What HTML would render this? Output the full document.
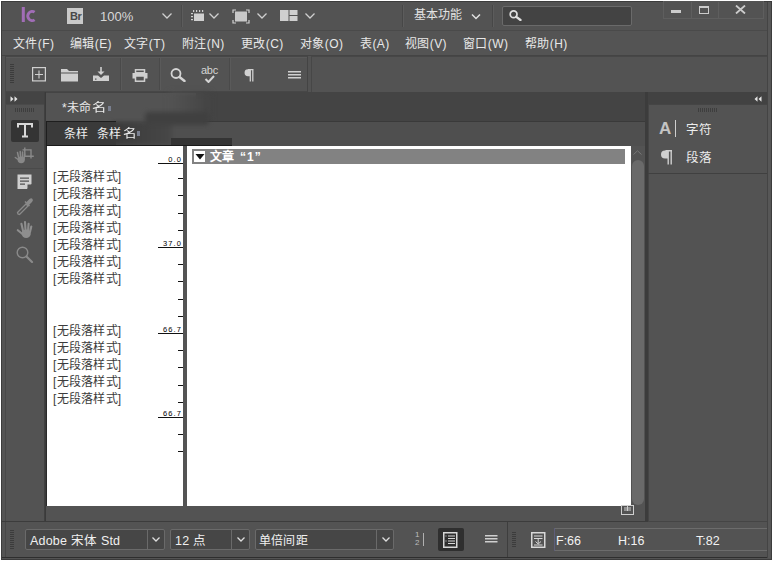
<!DOCTYPE html>
<html lang="zh-CN">
<head>
<meta charset="utf-8">
<style>
*{box-sizing:border-box;margin:0;padding:0}
html,body{width:772px;height:561px;overflow:hidden;background:#fff}
body{position:relative;font-family:"Liberation Sans",sans-serif;color:#e6e6e6}
.a{position:absolute}
#app{left:1px;top:1px;width:771px;height:559px;background:#535353;border:1px solid #3c3c3c;overflow:hidden}
.t{position:absolute;white-space:nowrap;font-size:12px;line-height:14px}
.vl{position:absolute;width:1px}
.hl{position:absolute;height:1px}
</style>
</head>
<body>
<div id="app" class="a"></div>

<!-- ===== TITLE BAR ===== -->
<div class="a" style="left:2px;top:2px;width:769px;height:28px;background:#535353"></div>
<div class="hl" style="left:2px;top:30px;width:769px;background:#4a4a4a"></div>
<!-- Ic logo -->
<svg class="a" style="left:18px;top:4px" width="22" height="22" viewBox="0 0 22 22"><g opacity="0.92"><rect x="3.8" y="3" width="3" height="15" fill="#a870c0"/><path d="M16.6 8.2 A4.3 4.6 0 1 0 16.6 15.8" fill="none" stroke="#a870c0" stroke-width="2.8"/></g></svg>
<!-- Br -->
<div class="a" style="left:67px;top:8px;width:16px;height:16px;background:#c9c9c9"></div>
<div class="t" style="left:70px;top:9px;font-size:11px;line-height:14px;font-weight:bold;color:#484848;letter-spacing:-0.5px">Br</div>
<div class="t" style="left:100px;top:10px;font-size:13px;line-height:14px;color:#d8d8d8">100%</div>

<!-- chevrons & icons in title -->
<svg class="a" style="left:160px;top:12px" width="14" height="8" viewBox="0 0 14 8"><path d="M2.5 1.5 L7 6 L11.5 1.5" fill="none" stroke="#cfcfcf" stroke-width="1.3"/></svg>
<div class="vl" style="left:181px;top:5px;height:22px;background:#4a4a4a"></div>
<div class="vl" style="left:182px;top:5px;height:22px;background:#5c5c5c"></div>
<!-- view options icon -->
<svg class="a" style="left:190px;top:10px" width="16" height="12" viewBox="0 0 16 12">
<g fill="#cfcfcf"><rect x="3" y="0" width="1.2" height="2"/><rect x="6" y="0" width="1.2" height="2"/><rect x="9" y="0" width="1.2" height="2"/><rect x="12" y="0" width="1.2" height="2"/>
<rect x="1" y="3" width="2" height="1.2"/><rect x="1" y="6" width="2" height="1.2"/><rect x="1" y="9" width="2" height="1.2"/>
<rect x="4" y="3.5" width="10" height="7.5"/></g></svg>
<svg class="a" style="left:207px;top:12px" width="14" height="8" viewBox="0 0 14 8"><path d="M2.5 1.5 L7 6 L11.5 1.5" fill="none" stroke="#cfcfcf" stroke-width="1.3"/></svg>
<!-- screen mode icon -->
<svg class="a" style="left:232px;top:9px" width="18" height="15" viewBox="0 0 18 15">
<g fill="none" stroke="#d0d0d0" stroke-width="1.2"><path d="M1 4V1H4"/><path d="M14 1H17V4"/><path d="M17 11V14H14"/><path d="M4 14H1V11"/></g>
<rect x="3" y="2.5" width="12" height="10" fill="#c8c8c8"/></svg>
<svg class="a" style="left:255px;top:12px" width="14" height="8" viewBox="0 0 14 8"><path d="M2.5 1.5 L7 6 L11.5 1.5" fill="none" stroke="#cfcfcf" stroke-width="1.3"/></svg>
<!-- arrange icon -->
<svg class="a" style="left:280px;top:10px" width="18" height="12" viewBox="0 0 18 12">
<g fill="#cfcfcf"><rect x="0" y="0" width="8.5" height="11"/><rect x="9.5" y="0" width="8" height="5"/><rect x="9.5" y="6" width="8" height="5"/></g></svg>
<svg class="a" style="left:303px;top:12px" width="14" height="8" viewBox="0 0 14 8"><path d="M2.5 1.5 L7 6 L11.5 1.5" fill="none" stroke="#cfcfcf" stroke-width="1.3"/></svg>

<div class="vl" style="left:402px;top:5px;height:22px;background:#474747"></div>
<div class="vl" style="left:403px;top:5px;height:22px;background:#5c5c5c"></div>
<div class="t" style="left:414px;top:8px;font-size:12px;line-height:14px;color:#e2e2e2">基本功能</div>
<svg class="a" style="left:469px;top:13px" width="14" height="8" viewBox="0 0 14 8"><path d="M3 1.5 L7 5.5 L11 1.5" fill="none" stroke="#e0e0e0" stroke-width="1.5"/></svg>
<div class="vl" style="left:492px;top:5px;height:22px;background:#474747"></div>
<div class="vl" style="left:493px;top:5px;height:22px;background:#5c5c5c"></div>
<!-- search box -->
<div class="a" style="left:502px;top:6px;width:130px;height:20px;background:#434343;border:1px solid #6a6a6a;border-radius:2px"></div>
<svg class="a" style="left:509px;top:10px" width="13" height="11" viewBox="0 0 13 11"><circle cx="4.6" cy="4.3" r="3.4" fill="none" stroke="#e0e0e0" stroke-width="1.7"/><path d="M7.3 6.8 L11.5 10" stroke="#e0e0e0" stroke-width="2.3" stroke-linecap="round"/></svg>
<!-- window controls -->
<div class="a" style="left:663px;top:1px;width:101px;height:18px;border:1px solid #5e5e5e;border-top:none;background:#535353"></div>
<div class="vl" style="left:691px;top:2px;height:16px;background:#5e5e5e"></div>
<div class="vl" style="left:718px;top:2px;height:16px;background:#5e5e5e"></div>
<div class="a" style="left:671px;top:10px;width:10px;height:3px;background:#cccccc"></div>
<div class="a" style="left:699px;top:6px;width:10px;height:8px;border:2px solid #cccccc;border-width:2px 1.5px 1.5px 1.5px"></div>
<svg class="a" style="left:735px;top:5px" width="11" height="9" viewBox="0 0 11 9"><path d="M1 0.5 L10 8.5 M10 0.5 L1 8.5" stroke="#cccccc" stroke-width="1.8"/></svg>

<!-- ===== MENU BAR ===== -->
<div class="a" style="left:2px;top:31px;width:769px;height:24px;background:#545454"></div>
<div class="hl" style="left:2px;top:55px;width:769px;background:#444"></div>
<div class="t" style="left:13px;top:37px;color:#e8e8e8;letter-spacing:0.4px">文件(F)</div>
<div class="t" style="left:70px;top:37px;color:#e8e8e8;letter-spacing:0.4px">编辑(E)</div>
<div class="t" style="left:124px;top:37px;color:#e8e8e8;letter-spacing:0.4px">文字(T)</div>
<div class="t" style="left:182px;top:37px;color:#e8e8e8;letter-spacing:0.4px">附注(N)</div>
<div class="t" style="left:241px;top:37px;color:#e8e8e8;letter-spacing:0.4px">更改(C)</div>
<div class="t" style="left:300px;top:37px;color:#e8e8e8;letter-spacing:0.4px">对象(O)</div>
<div class="t" style="left:360px;top:37px;color:#e8e8e8;letter-spacing:0.4px">表(A)</div>
<div class="t" style="left:405px;top:37px;color:#e8e8e8;letter-spacing:0.4px">视图(V)</div>
<div class="t" style="left:463px;top:37px;color:#e8e8e8;letter-spacing:0.4px">窗口(W)</div>
<div class="t" style="left:525px;top:37px;color:#e8e8e8;letter-spacing:0.4px">帮助(H)</div>

<!-- ===== CONTROL TOOLBAR ===== -->
<div class="a" style="left:5px;top:56px;width:303px;height:36px;border:1px solid #474747;border-right-color:#444;background:#535353"></div>
<div class="hl" style="left:6px;top:57px;width:301px;background:#5a5a5a"></div>
<div class="vl" style="left:311px;top:56px;height:36px;background:#474747"></div>
<div class="hl" style="left:311px;top:56px;width:460px;background:#474747"></div>
<!-- grip -->
<svg class="a" style="left:10px;top:64px" width="4" height="20" viewBox="0 0 4 20"><g fill="#3c3c3c">
<rect x="0" y="0" width="4" height="1"/><rect x="0" y="2" width="4" height="1"/><rect x="0" y="4" width="4" height="1"/><rect x="0" y="6" width="4" height="1"/><rect x="0" y="8" width="4" height="1"/><rect x="0" y="10" width="4" height="1"/><rect x="0" y="12" width="4" height="1"/><rect x="0" y="14" width="4" height="1"/><rect x="0" y="16" width="4" height="1"/><rect x="0" y="18" width="4" height="1"/></g></svg>
<!-- new doc -->
<svg class="a" style="left:32px;top:67px" width="14" height="15" viewBox="0 0 14 15"><rect x="0.6" y="0.6" width="12.8" height="13.3" fill="none" stroke="#d0d0d0" stroke-width="1.2"/><path d="M7 3.5V11.5M3 7.5H11" stroke="#d0d0d0" stroke-width="1.1"/></svg>
<!-- folder -->
<svg class="a" style="left:61px;top:69px" width="18" height="13" viewBox="0 0 18 13"><path d="M0 0H6L8 2H17V3.5H0Z" fill="#cfcfcf"/><rect x="0" y="4.5" width="17" height="8" fill="#cfcfcf"/></svg>
<!-- download -->
<svg class="a" style="left:92px;top:67px" width="18" height="15" viewBox="0 0 18 15"><path d="M9 0V6" stroke="#d0d0d0" stroke-width="1.6"/><path d="M5.5 4.5L9 8L12.5 4.5Z" fill="#d0d0d0"/><path d="M1 8.5H6L9 11L12 8.5H17V14H1Z" fill="#cfcfcf"/><rect x="3" y="11.5" width="1.5" height="1.2" fill="#535353"/></svg>
<div class="vl" style="left:120px;top:58px;height:32px;background:#4a4a4a"></div>
<div class="vl" style="left:121px;top:58px;height:32px;background:#5a5a5a"></div>
<!-- printer -->
<svg class="a" style="left:132px;top:69px" width="16" height="13" viewBox="0 0 16 13"><rect x="3.5" y="0.8" width="9" height="3" fill="none" stroke="#d0d0d0" stroke-width="1.5"/><rect x="0.5" y="4" width="15" height="5.5" fill="#d0d0d0"/><rect x="3.5" y="7" width="9" height="5.2" fill="#535353" stroke="#d0d0d0" stroke-width="1.5"/></svg>
<div class="vl" style="left:159px;top:58px;height:32px;background:#4a4a4a"></div>
<div class="vl" style="left:160px;top:58px;height:32px;background:#5a5a5a"></div>
<!-- magnifier -->
<svg class="a" style="left:170px;top:68px" width="17" height="14" viewBox="0 0 17 14"><circle cx="6" cy="5.5" r="4.5" fill="none" stroke="#d4d4d4" stroke-width="1.8"/><path d="M9.5 9 L14.5 13" stroke="#d4d4d4" stroke-width="2.4" stroke-linecap="round"/></svg>
<!-- abc check -->
<div class="t" style="left:201px;top:64px;font-size:11px;line-height:12px;color:#d4d4d4;letter-spacing:-0.3px">abc</div>
<svg class="a" style="left:204px;top:75px" width="12" height="8" viewBox="0 0 12 8"><path d="M1.5 4 L4.5 7 L10 1" fill="none" stroke="#d4d4d4" stroke-width="2"/></svg>
<div class="vl" style="left:229px;top:58px;height:32px;background:#4a4a4a"></div>
<div class="vl" style="left:230px;top:58px;height:32px;background:#5a5a5a"></div>
<!-- pilcrow -->
<svg class="a" style="left:244px;top:69px" width="10" height="13" viewBox="0 0 10 13"><path d="M4 0.7H9.5M6.3 0.7V12.5M8.8 0.7V12.5" fill="none" stroke="#d0d0d0" stroke-width="1.3"/><path d="M6.2 0.3H4A3.4 3.4 0 0 0 4 7.2H6.2Z" fill="#d0d0d0"/></svg>
<!-- hamburger -->
<svg class="a" style="left:288px;top:71px" width="13" height="8" viewBox="0 0 13 8"><path d="M0 0.75H13M0 3.75H13M0 6.75H13" stroke="#d0d0d0" stroke-width="1.3"/></svg>

<!-- ===== LEFT TOOL PANEL ===== -->
<div class="vl" style="left:5px;top:92px;height:429px;background:#484848"></div>
<div class="a" style="left:6px;top:92px;width:38px;height:12px;background:#444"></div>
<div class="hl" style="left:5px;top:104px;width:40px;background:#4a4a4a"></div>
<svg class="a" style="left:10px;top:96px" width="8" height="6" viewBox="0 0 8 6"><path d="M0.5 0.3L3.5 3L0.5 5.7Z M4.5 0.3L7.5 3L4.5 5.7Z" fill="#e4e4e4"/></svg>
<svg class="a" style="left:15px;top:108px" width="20" height="4" viewBox="0 0 20 4"><g fill="#3e3e3e"><rect x="0" y="0" width="1" height="4"/><rect x="2" y="0" width="1" height="4"/><rect x="4" y="0" width="1" height="4"/><rect x="6" y="0" width="1" height="4"/><rect x="8" y="0" width="1" height="4"/><rect x="10" y="0" width="1" height="4"/><rect x="12" y="0" width="1" height="4"/><rect x="14" y="0" width="1" height="4"/><rect x="16" y="0" width="1" height="4"/><rect x="18" y="0" width="1" height="4"/></g></svg>
<div class="vl" style="left:44px;top:92px;height:429px;background:#404040"></div>
<div class="vl" style="left:45px;top:92px;height:429px;background:#3a3a3a"></div>
<!-- T tool selected -->
<div class="a" style="left:11px;top:120px;width:28px;height:22px;background:#343434;border-radius:2px"></div>
<svg class="a" style="left:17px;top:123px" width="16" height="15" viewBox="0 0 16 15"><path d="M1 4.5V1H15V4.5M8 1V13.5M5 13.5H11" fill="none" stroke="#d8d8d8" stroke-width="2"/></svg>
<!-- position tool -->
<svg class="a" style="left:10px;top:142px" width="30" height="26" viewBox="0 0 30 26">
<g fill="none" stroke="#8a8a8a" stroke-width="1.4"><path d="M14.8 5.4V14.2H23.8M12.5 7.9H21V16.4"/></g>
<g stroke="#888" stroke-width="1.5" stroke-linecap="round" fill="none"><path d="M5.3 15.5L8.8 18M7.5 10.5L8.8 16.5M10.2 9.5L10.6 16.5M12.6 10L12.4 16.5M14.6 12L14 17.5"/></g>
<ellipse cx="11.2" cy="17.8" rx="3.6" ry="3.4" fill="#888"/></svg>
<div class="hl" style="left:8px;top:168px;width:35px;background:#4a4a4a"></div>
<!-- note tool -->
<svg class="a" style="left:17px;top:174px" width="16" height="16" viewBox="0 0 16 16"><path d="M0.5 0.5H14.5V10L10 15H0.5Z" fill="#cfcfcf"/><path d="M3 4.2H12M3 7.2H12M3 10.2H8" stroke="#535353" stroke-width="1.3"/><path d="M10.5 15V10.5H15" fill="#535353"/></svg>
<!-- eyedropper -->
<svg class="a" style="left:16px;top:197px" width="18" height="19" viewBox="0 0 18 19"><path d="M2 17 L1.5 15.5 L10 7 L12 9 L3.5 17.5Z" fill="none" stroke="#8a8a8a" stroke-width="1.3"/><path d="M10 5.5 L13.5 2 Q15.5 0.5 16.5 2 Q17.5 3.5 16 5 L12.5 8.5Z" fill="#8a8a8a"/><path d="M9 4.5 L13.5 9" stroke="#8a8a8a" stroke-width="1.5"/></svg>
<!-- hand -->
<svg class="a" style="left:12px;top:218px" width="26" height="24" viewBox="0 0 26 24">
<g stroke="#8e8e8e" stroke-width="2.1" stroke-linecap="round" fill="none"><path d="M5.8 12.2L10.5 16M9.4 5.8L11.2 13.5M13 4L13.6 13M16.6 5.8L16 13M19.3 8.6L18 14"/></g>
<ellipse cx="14.2" cy="15.8" rx="4.6" ry="4.2" fill="#8e8e8e"/></svg>
<!-- zoom -->
<svg class="a" style="left:16px;top:246px" width="18" height="17" viewBox="0 0 18 17"><circle cx="6.5" cy="6.5" r="5.3" fill="none" stroke="#8a8a8a" stroke-width="1.4"/><path d="M10.5 10.5 L16 16" stroke="#8a8a8a" stroke-width="2.2" stroke-linecap="round"/></svg>

<!-- ===== DOC TAB BAR ===== -->
<div class="a" style="left:46px;top:92px;width:599px;height:29px;background:#444"></div>
<div class="a" style="left:46px;top:93px;width:150px;height:28px;background:#535353"></div>
<div class="a" style="left:170px;top:93px;width:40px;height:28px;background:linear-gradient(90deg,#535353,#444);filter:blur(3px)"></div>

<div class="t" style="left:62px;top:101px;color:#eaeaea;letter-spacing:0.4px">*未命</div><div class="t" style="left:92px;top:101px;color:#eaeaea;transform:scaleX(1.2);transform-origin:left">名</div><div class="a" style="left:108px;top:106px;width:3px;height:5px;background:#7a8090;filter:blur(0.5px)"></div>

<!-- ===== SUB BAR ===== -->
<div class="a" style="left:46px;top:121px;width:599px;height:25px;background:#4f4f4f"></div>
<div class="hl" style="left:176px;top:121px;width:469px;background:#3a3a3a"></div>
<div class="a" style="left:112px;top:122px;width:60px;height:23px;background:linear-gradient(90deg,#3a3a3a,#474747);filter:blur(2px)"></div>
<div class="a" style="left:46px;top:121px;width:70px;height:25px;background:#3a3a3a;border:1px solid #1e1e1e;border-bottom:none;border-right:none"></div>

<div class="a" style="left:171px;top:138px;width:61px;height:7px;background:#343434"></div>
<div class="hl" style="left:46px;top:145px;width:186px;background:#1a1a1a"></div>
<div class="a" style="left:145px;top:112px;width:64px;height:13px;background:#404040;filter:blur(2px);border-radius:4px"></div>
<div class="t" style="left:64px;top:127px;color:#eeeeee">条样</div>
<div class="t" style="left:97px;top:127px;color:#eeeeee">条样</div><div class="t" style="left:123px;top:127px;color:#eeeeee;transform:scaleX(1.15);transform-origin:left">名</div><div class="a" style="left:137px;top:131px;width:3px;height:5px;background:#7a8090;filter:blur(0.5px)"></div>

<!-- ===== DOCUMENT WHITE AREAS ===== -->
<div class="a" style="left:46px;top:146px;width:1px;height:360px;background:#2a2a2a"></div>
<div class="a" style="left:47px;top:146px;width:136px;height:360px;background:#fff"></div>
<div class="a" style="left:183px;top:146px;width:4px;height:360px;background:#545454"></div>
<div class="a" style="left:187px;top:146px;width:444px;height:360px;background:#fff"></div>
<!-- story bar -->
<div class="a" style="left:192px;top:149px;width:433px;height:15px;background:#828282"></div>
<div class="a" style="left:194px;top:151px;width:11px;height:11px;background:#fff"></div>
<svg class="a" style="left:195px;top:154px" width="10" height="6" viewBox="0 0 10 6"><path d="M0.5 0H9.5L5 5.5Z" fill="#111"/></svg>
<div class="t" style="left:210px;top:150px;color:#fff;font-weight:bold">文章<span style="margin-left:6px;letter-spacing:1px">“1”</span></div>
<!-- scrollbar -->
<div class="a" style="left:631px;top:146px;width:14px;height:360px;background:#535353"></div>
<svg class="a" style="left:633px;top:150px" width="9" height="5" viewBox="0 0 9 5"><path d="M0.5 4.5L4.5 0.8L8.5 4.5" fill="none" stroke="#777" stroke-width="1"/></svg>
<div class="a" style="left:632px;top:160px;width:12px;height:345px;background:#6a6a6a;border-radius:6px"></div>
<!-- bottom h scroll area -->
<div class="a" style="left:46px;top:506px;width:599px;height:15px;background:#535353"></div>
<svg class="a" style="left:621px;top:505px" width="13" height="10" viewBox="0 0 13 10"><rect x="0.5" y="0.5" width="12" height="9" fill="none" stroke="#cfcfcf" stroke-width="1"/><path d="M3 3H10M3 5H10M6.5 1V6" stroke="#cfcfcf" stroke-width="1"/></svg>
<div class="hl" style="left:2px;top:521px;width:769px;background:#3c3c3c"></div>

<!-- ===== RIGHT PANEL DOCK ===== -->
<div class="a" style="left:645px;top:92px;width:3px;height:429px;background:#3c3c3c"></div>
<div class="a" style="left:648px;top:92px;width:119px;height:12px;background:#424242"></div>
<svg class="a" style="left:754px;top:96px" width="8" height="6" viewBox="0 0 8 6"><path d="M3.5 0.3L0.5 3L3.5 5.7Z M7.5 0.3L4.5 3L7.5 5.7Z" fill="#e4e4e4"/></svg>
<div class="a" style="left:648px;top:104px;width:120px;height:418px;background:#535353;border:1px solid #454545"></div>
<svg class="a" style="left:698px;top:108px" width="20" height="4" viewBox="0 0 20 4"><g fill="#3e3e3e"><rect x="0" y="0" width="1" height="4"/><rect x="2" y="0" width="1" height="4"/><rect x="4" y="0" width="1" height="4"/><rect x="6" y="0" width="1" height="4"/><rect x="8" y="0" width="1" height="4"/><rect x="10" y="0" width="1" height="4"/><rect x="12" y="0" width="1" height="4"/><rect x="14" y="0" width="1" height="4"/><rect x="16" y="0" width="1" height="4"/><rect x="18" y="0" width="1" height="4"/></g></svg>
<div class="hl" style="left:648px;top:173px;width:120px;background:#404040"></div>
<div class="t" style="left:659px;top:120px;font-size:17px;line-height:17px;font-weight:bold;color:#c4c4c4">A</div>
<div class="vl" style="left:675px;top:120px;height:17px;background:#cfcfcf"></div>
<div class="t" style="left:686px;top:123px;font-size:12.5px;color:#ececec">字符</div>
<svg class="a" style="left:660px;top:150px" width="13" height="15" viewBox="0 0 13 15"><path d="M5.5 0.8H12M8.2 0.8V14.5M11.2 0.8V14.5" fill="none" stroke="#cfcfcf" stroke-width="1.4"/><path d="M8 0.5H5A4 4 0 0 0 5 8.5H8Z" fill="#cfcfcf"/></svg>
<div class="t" style="left:686px;top:151px;font-size:12.5px;color:#ececec">段落</div>

<!-- ===== GALLEY INFO COLUMN ===== -->
<div class="t" style="left:53px;top:170px;color:#3c3c3c;letter-spacing:0.25px">[无段落样式]</div>
<div class="t" style="left:53px;top:187px;color:#3c3c3c;letter-spacing:0.25px">[无段落样式]</div>
<div class="t" style="left:53px;top:204px;color:#3c3c3c;letter-spacing:0.25px">[无段落样式]</div>
<div class="t" style="left:53px;top:221px;color:#3c3c3c;letter-spacing:0.25px">[无段落样式]</div>
<div class="t" style="left:53px;top:238px;color:#3c3c3c;letter-spacing:0.25px">[无段落样式]</div>
<div class="t" style="left:53px;top:255px;color:#3c3c3c;letter-spacing:0.25px">[无段落样式]</div>
<div class="t" style="left:53px;top:272px;color:#3c3c3c;letter-spacing:0.25px">[无段落样式]</div>
<div class="t" style="left:53px;top:324px;color:#3c3c3c;letter-spacing:0.25px">[无段落样式]</div>
<div class="t" style="left:53px;top:341px;color:#3c3c3c;letter-spacing:0.25px">[无段落样式]</div>
<div class="t" style="left:53px;top:358px;color:#3c3c3c;letter-spacing:0.25px">[无段落样式]</div>
<div class="t" style="left:53px;top:375px;color:#3c3c3c;letter-spacing:0.25px">[无段落样式]</div>
<div class="t" style="left:53px;top:392px;color:#3c3c3c;letter-spacing:0.25px">[无段落样式]</div>
<div class="hl" style="left:178px;top:178px;width:5px;background:#111"></div>
<div class="hl" style="left:178px;top:195px;width:5px;background:#111"></div>
<div class="hl" style="left:178px;top:213px;width:5px;background:#111"></div>
<div class="hl" style="left:178px;top:230px;width:5px;background:#111"></div>
<div class="hl" style="left:178px;top:264px;width:5px;background:#111"></div>
<div class="hl" style="left:178px;top:281px;width:5px;background:#111"></div>
<div class="hl" style="left:178px;top:299px;width:5px;background:#111"></div>
<div class="hl" style="left:178px;top:316px;width:5px;background:#111"></div>
<div class="hl" style="left:178px;top:350px;width:5px;background:#111"></div>
<div class="hl" style="left:178px;top:367px;width:5px;background:#111"></div>
<div class="hl" style="left:178px;top:385px;width:5px;background:#111"></div>
<div class="hl" style="left:178px;top:402px;width:5px;background:#111"></div>
<div class="hl" style="left:178px;top:434px;width:5px;background:#111"></div>
<div class="hl" style="left:178px;top:451px;width:5px;background:#111"></div>
<div class="hl" style="left:158px;top:163px;width:25px;background:#111"></div>
<div class="t" style="right:590px;top:156px;font-size:7.5px;line-height:7px;color:#000;letter-spacing:1.1px">0.0</div>
<div class="hl" style="left:158px;top:247px;width:25px;background:#111"></div>
<div class="t" style="right:590px;top:240px;font-size:7.5px;line-height:7px;color:#000;letter-spacing:1.1px">37.0</div>
<div class="hl" style="left:158px;top:333px;width:25px;background:#111"></div>
<div class="t" style="right:590px;top:326px;font-size:7.5px;line-height:7px;color:#000;letter-spacing:1.1px">66.7</div>
<div class="hl" style="left:158px;top:417px;width:25px;background:#111"></div>
<div class="t" style="right:590px;top:410px;font-size:7.5px;line-height:7px;color:#000;letter-spacing:1.1px">66.7</div>

<!-- ===== STATUS BAR ===== -->
<div class="a" style="left:2px;top:522px;width:769px;height:35px;background:#535353"></div>
<div class="vl" style="left:5px;top:522px;height:35px;background:#474747"></div>
<div class="hl" style="left:2px;top:557px;width:769px;background:#2e2e2e"></div>
<svg class="a" style="left:10px;top:530px" width="4" height="20" viewBox="0 0 4 20"><g fill="#3c3c3c">
<rect x="0" y="0" width="4" height="1"/><rect x="0" y="2" width="4" height="1"/><rect x="0" y="4" width="4" height="1"/><rect x="0" y="6" width="4" height="1"/><rect x="0" y="8" width="4" height="1"/><rect x="0" y="10" width="4" height="1"/><rect x="0" y="12" width="4" height="1"/><rect x="0" y="14" width="4" height="1"/><rect x="0" y="16" width="4" height="1"/><rect x="0" y="18" width="4" height="1"/></g></svg>
<!-- font dropdown -->
<div class="a" style="left:25px;top:529px;width:140px;height:21px;background:#464646;border:1px solid #6a6a6a;border-radius:2px"></div>
<div class="vl" style="left:147px;top:530px;height:19px;background:#6a6a6a"></div>
<div class="t" style="left:30px;top:534px;font-size:12.5px;line-height:14px;color:#f0f0f0;letter-spacing:0.2px">Adobe 宋体 Std</div>
<svg class="a" style="left:151px;top:536px" width="10" height="7" viewBox="0 0 10 7"><path d="M1.5 1.5L5 5L8.5 1.5" fill="none" stroke="#dedede" stroke-width="1.3"/></svg>
<!-- size dropdown -->
<div class="a" style="left:170px;top:529px;width:80px;height:21px;background:#464646;border:1px solid #6a6a6a;border-radius:2px"></div>
<div class="vl" style="left:231px;top:530px;height:19px;background:#6a6a6a"></div>
<div class="t" style="left:175px;top:534px;font-size:12.5px;line-height:14px;color:#f0f0f0;letter-spacing:0.3px">12 点</div>
<svg class="a" style="left:236px;top:536px" width="10" height="7" viewBox="0 0 10 7"><path d="M1.5 1.5L5 5L8.5 1.5" fill="none" stroke="#dedede" stroke-width="1.3"/></svg>
<!-- leading dropdown -->
<div class="a" style="left:255px;top:529px;width:139px;height:21px;background:#464646;border:1px solid #6a6a6a;border-radius:2px"></div>
<div class="vl" style="left:376px;top:530px;height:19px;background:#6a6a6a"></div>
<div class="t" style="left:259px;top:534px;font-size:12px;line-height:14px;color:#f0f0f0;letter-spacing:0.2px">单倍间距</div>
<svg class="a" style="left:381px;top:536px" width="10" height="7" viewBox="0 0 10 7"><path d="M1.5 1.5L5 5L8.5 1.5" fill="none" stroke="#dedede" stroke-width="1.3"/></svg>
<!-- 1/2 -->
<div class="t" style="left:415px;top:531px;font-size:8px;line-height:8px;color:#bdbdbd">1</div>
<div class="t" style="left:415px;top:539px;font-size:8px;line-height:8px;color:#bdbdbd">2</div>
<div class="vl" style="left:423px;top:533px;height:13px;background:#b0b0b0"></div>
<!-- selected button -->
<div class="a" style="left:438px;top:528px;width:26px;height:23px;background:#2f2f2f;border-radius:2px"></div>
<svg class="a" style="left:443px;top:532px" width="15" height="16" viewBox="0 0 15 16"><rect x="0.75" y="0.75" width="13" height="14.5" fill="none" stroke="#d8d8d8" stroke-width="1.5"/><path d="M5 4H12M5 6.5H12M5 9H12M5 11.5H12" stroke="#d8d8d8" stroke-width="1"/><path d="M2.5 4H3.5M2.5 9H3.5" stroke="#d8d8d8" stroke-width="1"/></svg>
<!-- hamburger -->
<svg class="a" style="left:485px;top:535px" width="13" height="8" viewBox="0 0 13 8"><path d="M0 0.75H12.5M0 3.75H12.5M0 6.75H12.5" stroke="#d0d0d0" stroke-width="1.3"/></svg>
<div class="vl" style="left:507px;top:522px;height:35px;background:#3e3e3e"></div>
<svg class="a" style="left:512px;top:532px" width="4" height="16" viewBox="0 0 4 16"><g fill="#3c3c3c"><rect x="0" y="0" width="4" height="1"/><rect x="0" y="2" width="4" height="1"/><rect x="0" y="4" width="4" height="1"/><rect x="0" y="6" width="4" height="1"/><rect x="0" y="8" width="4" height="1"/><rect x="0" y="10" width="4" height="1"/><rect x="0" y="12" width="4" height="1"/><rect x="0" y="14" width="4" height="1"/></g></svg>
<!-- story icon -->
<svg class="a" style="left:531px;top:532px" width="15" height="16" viewBox="0 0 15 16"><rect x="0.75" y="0.75" width="13" height="14.5" fill="none" stroke="#d8d8d8" stroke-width="1.5"/><path d="M3 4H11.5M3 6.5H11.5M7.2 6.5V11.5M4.5 9.5L7.2 12L10 9.5M3 13H11.5" fill="none" stroke="#d8d8d8" stroke-width="1"/></svg>
<!-- info field -->
<div class="hl" style="left:554px;top:528px;width:214px;background:#6c6c6c"></div>
<div class="hl" style="left:554px;top:550px;width:214px;background:#6c6c6c"></div>
<div class="vl" style="left:554px;top:528px;height:23px;background:#5e5e7a"></div>
<div class="t" style="left:556px;top:534px;font-size:12.5px;line-height:14px;color:#f2f2f2">F:66</div>
<div class="t" style="left:618px;top:534px;font-size:12.5px;line-height:14px;color:#f2f2f2">H:16</div>
<div class="t" style="left:696px;top:534px;font-size:12.5px;line-height:14px;color:#f2f2f2">T:82</div>

<!-- right edge strip -->
<div class="vl" style="left:767px;top:2px;height:556px;background:#444"></div>
<div class="a" style="left:768px;top:2px;width:3px;height:556px;background:#575757"></div>

</body>
</html>
